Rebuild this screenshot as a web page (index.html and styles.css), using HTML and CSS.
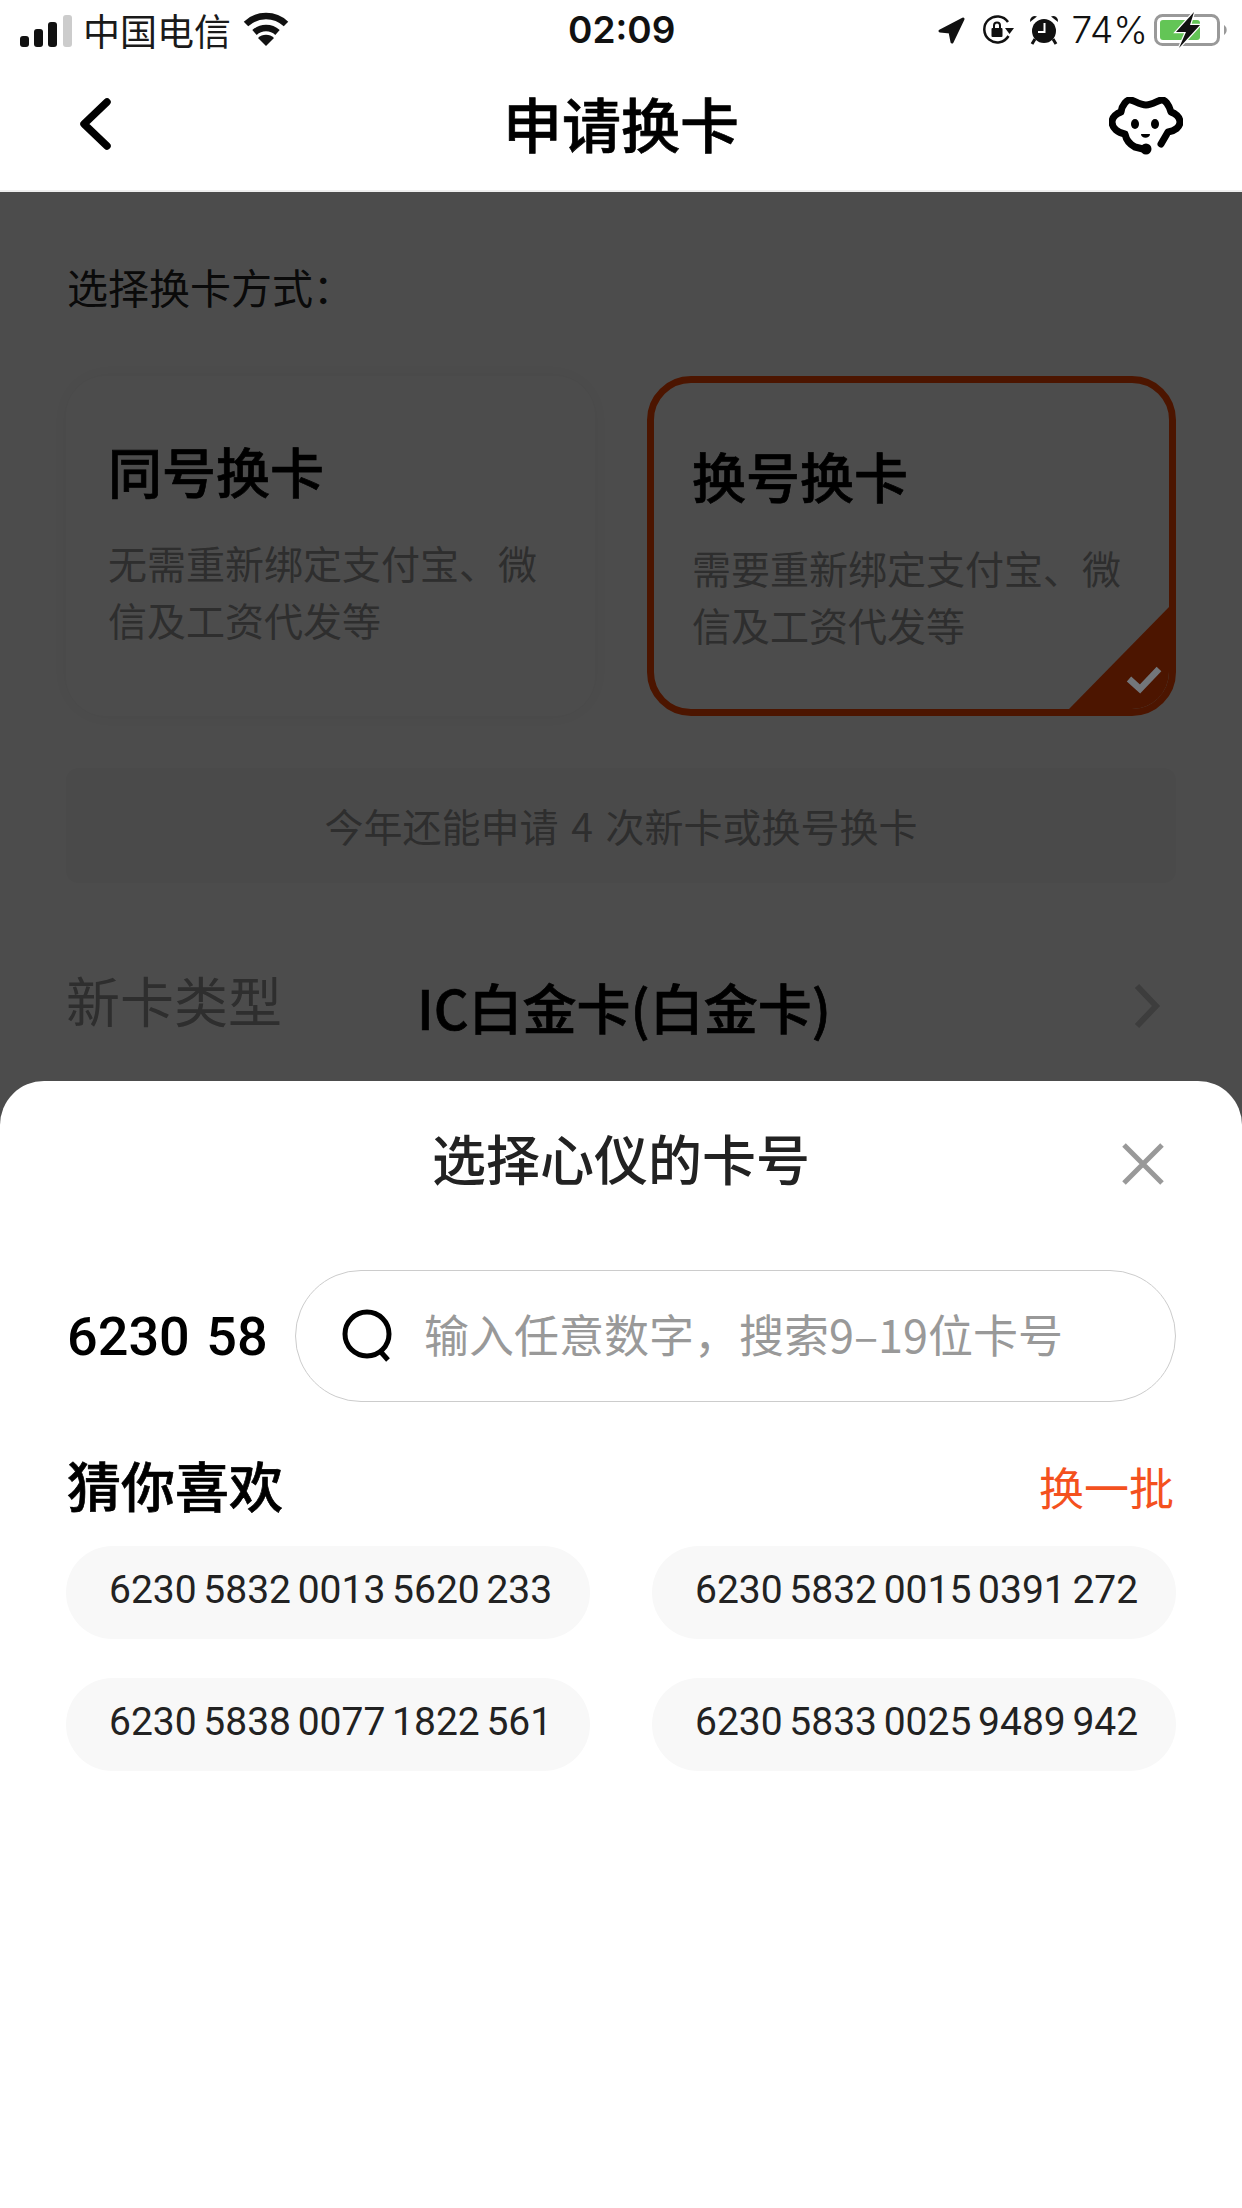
FILE: index.html
```html
<!DOCTYPE html>
<html lang="zh-CN">
<head>
<meta charset="utf-8">
<title>申请换卡</title>
<link rel="stylesheet" href="styles.css">
</head>
<body>
<div class="app">
  <header class="status">
    <div class="status-left">
      <svg class="signal" width="52" height="32" viewBox="0 0 52 32">
        <rect x="0" y="21" width="9" height="11" rx="3" fill="#111"/>
        <rect x="14" y="14" width="9" height="18" rx="3" fill="#111"/>
        <rect x="28" y="7" width="9" height="25" rx="3" fill="#111"/>
        <rect x="43" y="0" width="9" height="32" rx="3" fill="#ccc"/>
      </svg>
      <span class="carrier">中国电信</span>
      <svg class="wifi" width="46" height="34" viewBox="0 0 46 34">
        <path d="M3 12A29 29 0 0 1 43 12" fill="none" stroke="#111" stroke-width="6.5"/>
        <path d="M11.5 20.5A17 17 0 0 1 34.5 20.5" fill="none" stroke="#111" stroke-width="6.5"/>
        <path d="M23 34L15 26A11.500 11.500 0 0 1 31 26Z" fill="#111"/>
      </svg>
    </div>
    <span class="time">02:09</span>
    <div class="status-right">
      <svg class="loc" width="27" height="27" viewBox="0 0 27 27">
        <path d="M2 14L25 2L14 25L12 15Z" fill="#111" stroke="#111" stroke-width="3" stroke-linejoin="round"/>
      </svg>
      <svg class="rot" width="32" height="30" viewBox="0 0 32 30">
        <path d="M26 7A13 13 0 1 0 26.500 21" fill="none" stroke="#111" stroke-width="2.500"/>
        <path d="M23 13L32 13L27.500 19Z" fill="#111"/>
        <rect x="9.500" y="13" width="11" height="9" rx="1" fill="#111"/>
        <path d="M12 13V10.500A3 3 0 0 1 18 10.500V13" fill="none" stroke="#111" stroke-width="2"/>
      </svg>
      <svg class="alarm" width="30" height="30" viewBox="0 0 30 30">
        <circle cx="15" cy="16" r="12" fill="#111"/>
        <path d="M1 7A5 5 0 0 1 8 1.500ZM29 7A5 5 0 0 0 22 1.500Z" fill="#111"/>
        <path d="M6 24L3 29M24 24L27 29" stroke="#111" stroke-width="3"/>
        <path d="M15.500 8V17H9" fill="none" stroke="#fff" stroke-width="2"/>
      </svg>
      <span class="percent">74%</span>
      <svg class="battery" width="74" height="36" viewBox="0 0 74 36">
        <rect x="1.500" y="3.500" width="63" height="29" rx="7" fill="none" stroke="#999" stroke-width="3"/>
        <rect x="6" y="8" width="40" height="20" rx="3" fill="#63c556"/>
        <path d="M70 13A6 6 0 0 1 70 23Z" fill="#999"/>
        <path d="M40 0L22 20H32L25 36L46 13H36Z" fill="#111" stroke="#fff" stroke-width="2.500" paint-order="stroke"/>
      </svg>
    </div>
  </header>

  <nav class="nav">
    <svg class="back" width="34" height="52" viewBox="0 0 34 52">
      <path d="M29 4L6 26L29 48" fill="none" stroke="#000" stroke-width="7.500" stroke-linecap="round" stroke-linejoin="round"/>
    </svg>
    <h1 class="nav-title">申请换卡</h1>
    <svg class="bot" width="74" height="58" viewBox="0 0 74 58">
      <path d="M52 47L59 35C66 34 71 30 71 25C71 20 66 16 62 15C60 8 56 2 52 3C48 4 43 8 37 8C31 8 26 4 22 3C18 2 13 8 12 15C8 16 3 20 3 25C3 31 9 36 16 37C17 42 20 47 26 50L34 52" fill="none" stroke="#000" stroke-width="7" stroke-linecap="round" stroke-linejoin="round"/>
      <ellipse cx="26" cy="27" rx="4" ry="5" fill="#000"/>
      <ellipse cx="46" cy="27" rx="4" ry="5" fill="#000"/>
      <path d="M32 37H41C41 42 32 42 32 37Z" fill="#000"/>
      <circle cx="37" cy="52" r="5.500" fill="#000"/>
    </svg>
  </nav>

  <main class="content">
    <p class="method-label">选择换卡方式：</p>
    <div class="cards">
      <section class="card">
        <h2 class="card-title">同号换卡</h2>
        <p class="card-desc">无需重新绑定支付宝、微信及工资代发等</p>
      </section>
      <section class="card card-on">
        <h2 class="card-title">换号换卡</h2>
        <p class="card-desc">需要重新绑定支付宝、微信及工资代发等</p>
        <svg class="corner" width="100" height="102" viewBox="0 0 100 102">
          <path d="M100 0V102H0Z" fill="#ff4800"/>
        </svg>
        <svg class="tick" width="36" height="28" viewBox="0 0 36 28">
          <path d="M3 13L14 23L33 3" fill="none" stroke="#73767a" stroke-width="6.5"/>
        </svg>
      </section>
    </div>
    <div class="quota">今年还能申请 4 次新卡或换号换卡</div>
    <div class="type-row">
      <span class="type-label">新卡类型</span>
      <span class="type-value">IC白金卡(白金卡)</span>
      <svg class="chev" width="30" height="46" viewBox="0 0 30 46">
        <path d="M5 3L24 23L5 43" fill="none" stroke="#ccc" stroke-width="6"/>
      </svg>
    </div>
  </main>

  <div class="scrim"></div>

  <aside class="sheet">
    <div class="sheet-head">
      <span></span>
      <h2 class="sheet-title">选择心仪的卡号</h2>
      <svg class="close" width="42" height="42" viewBox="0 0 42 42">
        <path d="M2 2L40 40M40 2L2 40" stroke="#999" stroke-width="5"/>
      </svg>
    </div>
    <div class="search-row">
      <span class="prefix">6230 58</span>
      <div class="search">
        <svg class="search-icon" width="54" height="54" viewBox="0 0 54 54">
          <circle cx="26" cy="25" r="22" fill="none" stroke="#000" stroke-width="5"/>
          <path d="M39 42L47 51" stroke="#000" stroke-width="5"/>
        </svg>
        <span class="placeholder">输入任意数字，搜索9–19位卡号</span>
      </div>
    </div>
    <div class="guess-head">
      <h3 class="guess-title">猜你喜欢</h3>
      <span class="refresh">换一批</span>
    </div>
    <div class="numbers">
      <div class="number">6230 5832 0013 5620 233</div>
      <div class="number">6230 5832 0015 0391 272</div>
      <div class="number">6230 5838 0077 1822 561</div>
      <div class="number">6230 5833 0025 9489 942</div>
    </div>
  </aside>
</div>
</body>
</html>
```
FILE: styles.css
```css
* { box-sizing: border-box; }
html, body { margin: 0; padding: 0; background: #fff; }
h1, h2, h3, p { margin: 0; font-weight: normal; }

.app {
  position: relative;
  width: 1242px;
  height: 2208px;
  overflow: hidden;
  background: #fff;
  font-family: "Noto Sans CJK SC", Roboto, sans-serif;
  color: #000;
}

/* status bar */
.status {
  position: relative;
  height: 60px;
  display: flex;
  align-items: center;
  justify-content: space-between;
  padding: 0 14px 0 20px;
}
.status-left, .status-right { display: flex; align-items: center; }
.signal { margin-top: 1px; }
.carrier { margin-left: 11px; font-size: 37px; line-height: 60px; color: #1a1a1a; }
.wifi { margin-left: 12px; margin-top: -2px; }
.time {
  position: absolute;
  left: 568px;
  top: 0;
  font-family: Inter, Roboto, sans-serif;
  font-weight: 600;
  font-size: 37px;
  line-height: 60px;
  color: #111;
}
.rot { margin-left: 17px; }
.alarm { margin-left: 15px; }
.percent {
  margin-left: 13px;
  font-family: Inter, Roboto, sans-serif;
  font-weight: 300;
  font-size: 37px;
  line-height: 60px;
  color: #111;
}
.battery { margin-left: 6px; }

/* nav bar */
.nav {
  height: 132px;
  border-bottom: 2px solid #eee;
  display: grid;
  grid-template-columns: 1fr auto 1fr;
  align-items: center;
  padding: 0 59px;
}
.back { margin-top: -2px; margin-left: 19px; }
.nav-title { font-size: 59px; font-weight: 500; -webkit-text-stroke: 0.7px #000; line-height: 80px; margin-top: -4px; text-align: center; }
.bot { justify-self: end; margin-top: 2px; }

/* page under the sheet */
.content { padding: 66px 66px 0; }
.method-label { font-size: 41px; line-height: 56px; color: #222; margin-left: 1px; }
.cards {
  display: grid;
  grid-template-columns: 1fr 1fr;
  gap: 52px;
  margin-top: 62px;
}
.card {
  position: relative;
  height: 340px;
  padding: 60px 36px 0 42px;
  border-radius: 40px;
  background: #fff;
  box-shadow: 0 0 24px rgba(0, 0, 0, 0.06);
}
.card-on {
  padding: 58px 30px 0 38px;
  border: 7px solid #ff4800;
  border-radius: 44px;
  box-shadow: none;
  overflow: hidden;
}
.card-title { font-size: 54px; font-weight: 500; -webkit-text-stroke: 0.7px #000; line-height: 70px; color: #000; }
.card-desc { margin-top: 28px; font-size: 39px; line-height: 57px; color: #999; }
.corner { position: absolute; right: 0; bottom: 0; }
.tick { position: absolute; right: 7px; bottom: 15px; z-index: 2; }

.quota {
  margin-top: 52px;
  height: 115px;
  border-radius: 12px;
  background: #f8f8f8;
  text-align: center;
  font-size: 39px;
  word-spacing: 4px;
  line-height: 115px;
  color: #999;
}
.type-row {
  margin-top: 77px;
  display: flex;
  align-items: flex-start;
}
.type-label { width: 351px; font-size: 54px; line-height: 80px; color: #999; }
.type-value { margin-top: 7px; font-size: 54px; font-weight: 500; -webkit-text-stroke: 0.7px #000; line-height: 80px; color: #000; }
.chev { margin-left: auto; margin-top: 23px; margin-right: 14px; }

.scrim {
  position: absolute;
  left: 0;
  right: 0;
  top: 192px;
  bottom: 0;
  z-index: 1;
  background: rgba(0, 0, 0, 0.7);
}

/* bottom sheet */
.sheet {
  position: absolute;
  left: 0;
  right: 0;
  top: 1081px;
  bottom: 0;
  z-index: 3;
  padding: 39px 66px 0;
  background: #fff;
  border-radius: 44px 44px 0 0;
}
.sheet-head {
  display: grid;
  grid-template-columns: 1fr auto 1fr;
  align-items: center;
  height: 80px;
}
.sheet-title { font-size: 54px; font-weight: 500; line-height: 80px; margin-top: -5px; color: #222; }
.close { justify-self: end; margin-right: 12px; margin-top: 8px; }

.search-row { margin-top: 70px; display: flex; align-items: center; gap: 28px; }
.prefix {
  flex: none;
  width: 200px;
  margin-left: 1px;
  font-family: Roboto, sans-serif;
  font-weight: 500;
  font-size: 54px;
  word-spacing: 3px;
  white-space: pre;
  color: #000;
}
.search {
  flex: 1;
  height: 132px;
  border: 1px solid #ccc;
  border-radius: 66px;
  display: flex;
  align-items: center;
  padding-left: 45px;
}
.search-icon { flex: none; }
.placeholder { margin-left: 29px; margin-top: -4px; font-size: 45px; line-height: 60px; color: #999; white-space: nowrap; }

.guess-head {
  margin-top: 46px;
  height: 80px;
  display: flex;
  align-items: center;
  justify-content: space-between;
}
.guess-title { margin-left: 1px; margin-top: -6px; font-size: 54px; font-weight: 500; -webkit-text-stroke: 0.7px #000; line-height: 80px; color: #000; }
.refresh { margin-right: 2px; margin-top: -3px; font-size: 45px; line-height: 60px; color: #f4511e; }

.numbers {
  margin-top: 18px;
  display: grid;
  grid-template-columns: 1fr 1fr;
  gap: 39px 62px;
}
.number {
  height: 93px;
  border-radius: 46.500px;
  background: #f8f8f8;
  padding-left: 43px;
  font-family: Roboto, sans-serif;
  font-size: 39px;
  word-spacing: -3px;
  line-height: 89px;
  color: #222;
  white-space: nowrap;
}
```
